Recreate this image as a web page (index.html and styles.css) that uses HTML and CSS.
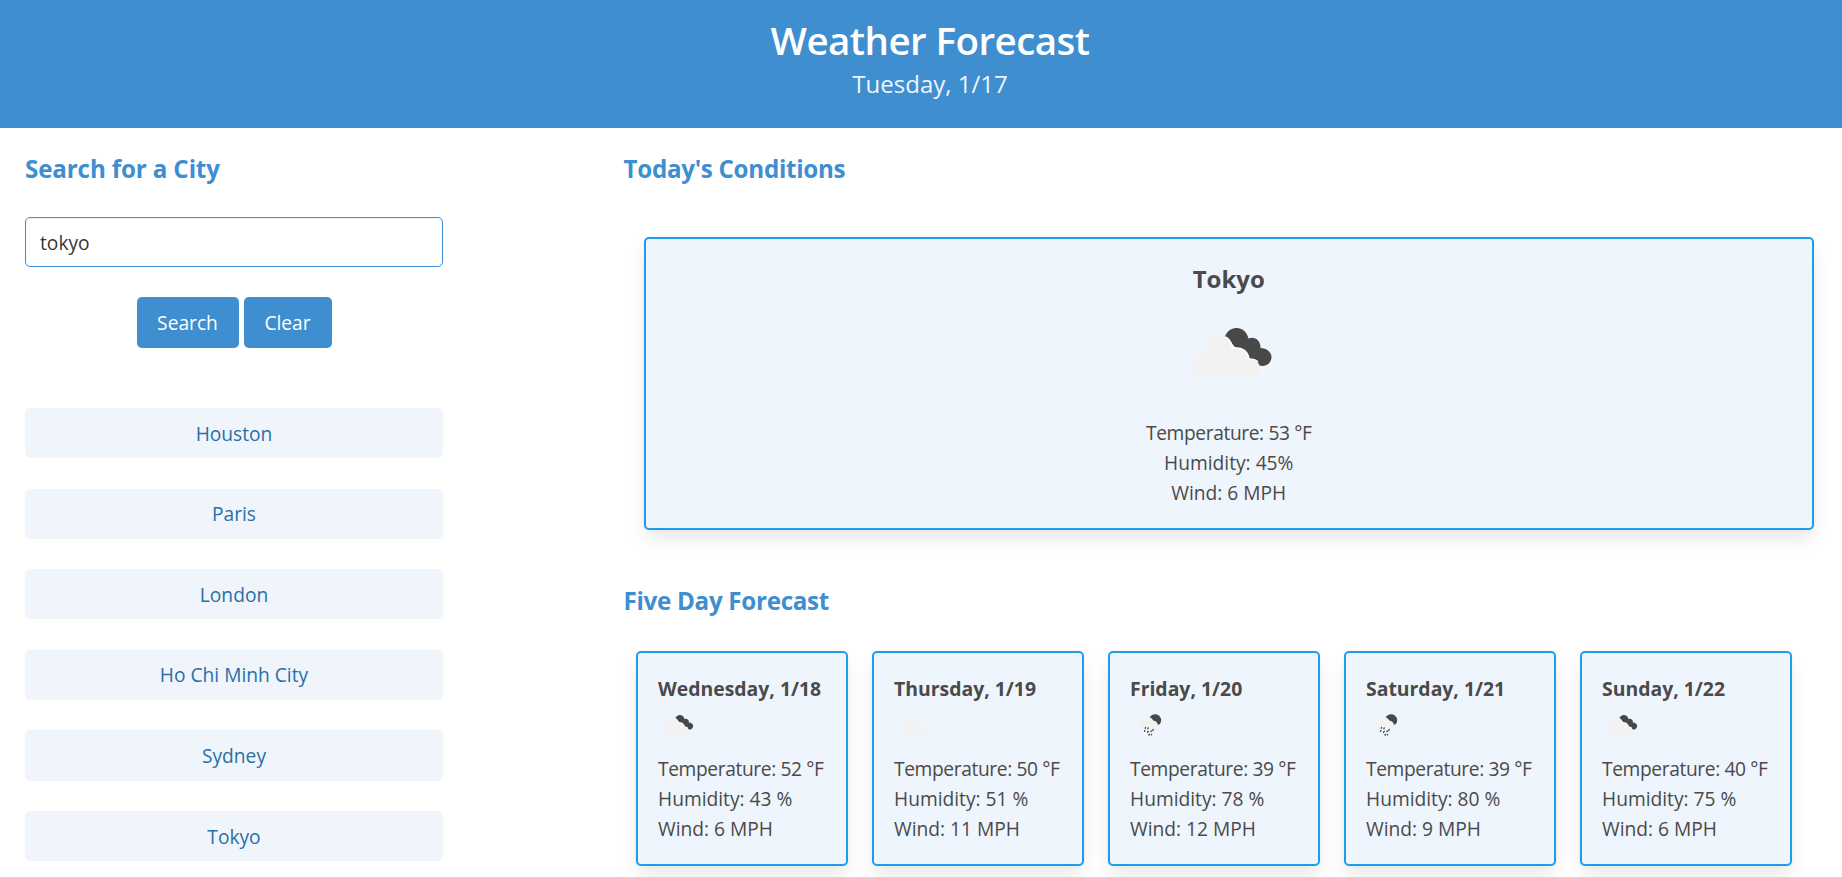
FILE: index.html
```html
<!DOCTYPE html>
<html lang="en">
<head>
<meta charset="utf-8">
<title>Weather Forecast</title>
<link rel="stylesheet" href="styles.css">
</head>
<body>
<svg class="defs" width="0" height="0">
  <symbol id="cloud" viewBox="0 0 100 100">
    <path fill="#f2f2f2" d="M29 70a10.500 10.500 0 0 1-1-21c2 0 3 0 4 .5C33 36 40 29.500 48 29.500c7 0 12 4 14 10 8-1 13 3 14 11 7-1 13 3 13 9.500S84 70 78 70z"/>
  </symbol>
  <symbol id="broken" viewBox="0 0 100 100">
    <path fill="#484848" d="M46 29C49 23 53 21 58 21c5 0 10 4 11.500 10.500C75 29 82 33 81.500 41c6 0 11 4 11 9s-4 9-9 9c-3 0-5-1-7-4L70 51c-2-4-5-7-14-11z"/>
    <path fill="#f2f2f2" d="M24 71.500a12 12 0 0 1 0-24c1 0 2 0 3 .5C27 36 32 29 40 29c3 0 5 0 6.500 1 4 2 6 6 7.500 11.500 8-2 15 2 16 10.500 7 0 11 4 11 9.500 0 6-4 10-10 10z"/>
    <path fill="none" stroke="#fff" stroke-width="1.500" d="M46.500 30c4 2 6 6 7.500 11.500 8-2 15 2 16 10.500 4 0 7 1 9 3"/>
  </symbol>
  <symbol id="rain" viewBox="0 0 100 100">
    <path fill="#484848" d="M51 29c3-7 9-10 15-10 9 0 16 7 16 16 0 5-2 9-5 11l-6 1c-1-7-6-11-11-12z"/>
    <path fill="#f2f2f2" d="M32 57a9 9 0 0 1-1-18c1-8 6-12 13-11 9-3 15 2 17 9 8 0 12 4 12 10s-4 10-9 10z"/>
    <path stroke="#484848" stroke-width="3.500" stroke-linecap="round" fill="none" d="M41 54l-1 2M39 62l-1 2M48 55l-1 2M48 64l-2 3M51 72l-1 2M56 63l-1 2M61 59l-1 3M57 72l-1 1"/>
  </symbol>
</svg>
<header class="hero">
  <h1 class="hero-title">Weather Forecast</h1>
  <p class="hero-date">Tuesday, 1/17</p>
</header>
<main class="columns">
  <aside class="sidebar">
    <h2 class="heading">Search for a City</h2>
    <input class="city-input" type="text" value="tokyo">
    <div class="buttons"><button class="button search">Search</button><button class="button clear">Clear</button></div>
    <div class="history">
      <button class="city">Houston</button>
      <button class="city">Paris</button>
      <button class="city">London</button>
      <button class="city">Ho Chi Minh City</button>
      <button class="city">Sydney</button>
      <button class="city">Tokyo</button>
    </div>
  </aside>
  <section class="content">
    <h2 class="heading">Today's Conditions</h2>
    <article class="card today">
      <h3 class="today-city">Tokyo</h3>
      <svg class="today-icon"><use href="#broken"/></svg>
      <p class="temperature">Temperature: 53 °F</p>
      <p>Humidity: 45%</p>
      <p>Wind: 6 MPH</p>
    </article>
    <h2 class="heading">Five Day Forecast</h2>
    <div class="forecast">
      <article class="card day">
        <h3 class="day-name">Wednesday, 1/18</h3>
        <svg class="day-icon"><use href="#broken"/></svg>
        <p class="temperature">Temperature: 52 °F</p><p>Humidity: 43 %</p><p>Wind: 6 MPH</p>
      </article>
      <article class="card day">
        <h3 class="day-name">Thursday, 1/19</h3>
        <svg class="day-icon"><use href="#cloud"/></svg>
        <p class="temperature">Temperature: 50 °F</p><p>Humidity: 51 %</p><p>Wind: 11 MPH</p>
      </article>
      <article class="card day">
        <h3 class="day-name">Friday, 1/20</h3>
        <svg class="day-icon"><use href="#rain"/></svg>
        <p class="temperature">Temperature: 39 °F</p><p>Humidity: 78 %</p><p>Wind: 12 MPH</p>
      </article>
      <article class="card day">
        <h3 class="day-name">Saturday, 1/21</h3>
        <svg class="day-icon"><use href="#rain"/></svg>
        <p class="temperature">Temperature: 39 °F</p><p>Humidity: 80 %</p><p>Wind: 9 MPH</p>
      </article>
      <article class="card day">
        <h3 class="day-name">Sunday, 1/22</h3>
        <svg class="day-icon"><use href="#broken"/></svg>
        <p class="temperature">Temperature: 40 °F</p><p>Humidity: 75 %</p><p>Wind: 6 MPH</p>
      </article>
    </div>
  </section>
</main>
</body>
</html>
```
FILE: styles.css
```css
* { box-sizing: border-box; margin: 0; padding: 0; }
html { overflow: hidden; }
body { font: 19.2px/30px "Open Sans", "Noto Sans", sans-serif; color: #4a4a4a; background: #fff; height: 877px; overflow: hidden; }
.defs { display: block; position: absolute; }
.hero { height: 128px; padding: 18px 0 0 18px; background: #3e8ed0; text-align: center; color: #fff; }
.hero-title { font-size: 38.5px; line-height: 45px; font-weight: 600; letter-spacing: -.55px; }
.hero-date { font-size: 24px; line-height: 41px; color: #eff5fb; }
.columns { display: flex; padding-left: 25px; }
.sidebar { width: 418px; }
.heading { font-size: 24.200px; line-height: 32px; font-weight: 700; letter-spacing: -.3px; color: #3e8ed0; padding-top: 25px; white-space: nowrap; }
.sidebar .heading { letter-spacing: -.15px; }
.city-input { display: block; width: 418px; height: 50px; margin-top: 32px; padding: 1px 14px 0; border: 1px solid #3e8ed0; border-radius: 5px; font: inherit; color: #363636; outline: none; box-shadow: inset 0 1px 2px rgba(10,10,10,.05); }
.buttons { display: flex; justify-content: center; gap: 5px; margin-top: 30px; }
.button { height: 51px; border: 0; border-radius: 5px; background: #3e8ed0; color: #fff; font: inherit; }
.search { width: 102px; }
.clear { width: 88px; }
.history { display: flex; flex-direction: column; gap: 30.300px; margin-top: 60px; }
.city { height: 50.300px; padding-top: 1px; border: 0; border-radius: 5px; background: #eff5fb; color: #296fa8; font: inherit; }
.content { width: 1190px; margin-left: 180.500px; }
.card { border: 2px solid #209cee; border-radius: 5px; background: #eff5fc; box-shadow: 0 10px 20px -2px rgba(10,10,10,.1), 0 0 0 1px rgba(10,10,10,.02); }
.today { height: 293px; margin: 52px 0 30px 20.500px; padding-top: 23px; text-align: center; }
.today-city { font-size: 24px; line-height: 34px; font-weight: 700; }
.today-icon { display: block; width: 100px; height: 100px; margin: 11px auto; }
.temperature { letter-spacing: -.38px; }
.forecast { display: flex; gap: 24px; margin: 34px 0 0 12.500px; }
.day { flex: none; width: 212px; height: 215px; padding: 21px 20px; white-space: nowrap; }
.day-name { font-size: 19.400px; line-height: 30px; font-weight: 700; }
.day-icon { display: block; width: 38px; height: 38px; margin: 3px 0 9px; }
```
